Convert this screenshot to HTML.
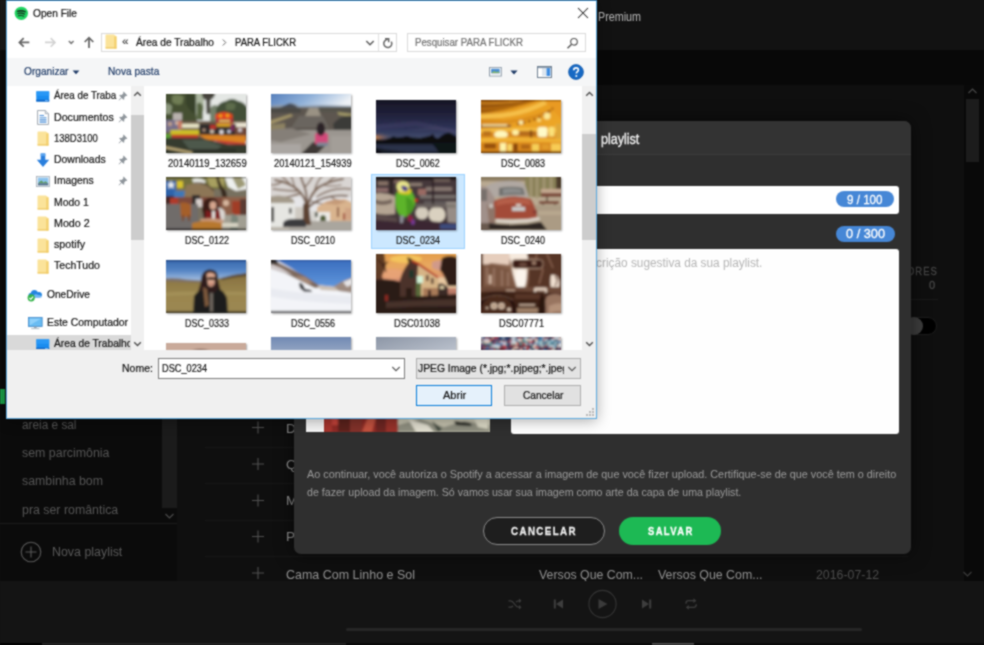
<!DOCTYPE html>
<html>
<head>
<meta charset="utf-8">
<title>Open File</title>
<style>
*{box-sizing:border-box;margin:0;padding:0}
html,body{width:984px;height:645px;overflow:hidden;background:#0e0e0e;font-family:"Liberation Sans",sans-serif;}
.abs{position:absolute}
.tx{position:absolute;white-space:pre;transform-origin:0 50%}
#sp{position:absolute;left:0;top:0;width:984px;height:645px;background:#0f0f0f;overflow:hidden}
#modal{position:absolute;left:294px;top:121px;width:617px;height:433px;background:#2f2f2f;border-radius:7px;overflow:hidden;box-shadow:0 0 18px rgba(0,0,0,.55)}
#mo{position:absolute;left:0;top:0;width:984px;height:645px;overflow:hidden}
.badge{position:absolute;background:#4687d6;border-radius:9px;height:16px}
#dlg{position:absolute;left:0;top:0;width:984px;height:645px;overflow:hidden}
#dlgbox{position:absolute;left:6px;top:0;width:591px;height:419px;background:#fff;box-shadow:0 2px 13px rgba(0,0,0,.32)}
.th{position:absolute;box-shadow:1px 1px 2px rgba(0,0,0,.35);overflow:hidden}
.th svg{display:block}
#dlg .tx{-webkit-text-stroke:.22px currentColor}
#bw{position:absolute;left:-10px;top:-10px;width:1004px;height:665px;overflow:hidden;background:#101010;filter:url(#soft)}
#pg{position:absolute;left:10px;top:10px;width:984px;height:645px;overflow:hidden}

</style>
</head>
<body>
<svg width="0" height="0" style="position:absolute"><defs><filter id="soft" x="0" y="0" width="100%" height="100%" color-interpolation-filters="sRGB"><feConvolveMatrix order="3" kernelMatrix="1 2 1 2 6 2 1 2 1" divisor="18" edgeMode="duplicate" preserveAlpha="true"/></filter></defs></svg>
<div id="bw"><div id="pg">
<div id="sp">
<div class="abs" style="left:0px;top:0px;width:984px;height:50px;background:#121212;"></div>
<div class="abs" style="left:0px;top:50px;width:984px;height:35px;background:#080808;"></div>
<div class="abs" style="left:0px;top:85px;width:984px;height:496px;background:#0f0f0f;"></div>
<div class="abs" style="left:0px;top:50px;width:177px;height:531px;background:#0b0b0b;"></div>
<div class="abs" style="left:0px;top:0px;width:6px;height:50px;background:#1a1a1a;"></div>
<div class="abs" style="left:0px;top:389px;width:5px;height:15px;background:#1a9e48;"></div>
<div class="tx" style="left:598.00px;top:8.75px;font-size:12.5px;line-height:16.5px;color:#bdbdbd;transform:scaleX(0.8597);">Premium</div>
<div class="tx" style="left:21.50px;top:417.15px;font-size:12.5px;line-height:16.5px;color:#565656;transform:scaleX(0.9447);">areia e sal</div>
<div class="tx" style="left:21.50px;top:445.15px;font-size:12.5px;line-height:16.5px;color:#565656;transform:scaleX(0.9917);">sem parcimônia</div>
<div class="tx" style="left:21.50px;top:473.35px;font-size:12.5px;line-height:16.5px;color:#565656;transform:scaleX(0.9878);">sambinha bom</div>
<div class="tx" style="left:21.50px;top:501.75px;font-size:12.5px;line-height:16.5px;color:#565656;transform:scaleX(0.9890);">pra ser romântica</div>
<div class="abs" style="left:162px;top:50px;width:15px;height:458px;background:#1b1b1b;"></div>
<svg class="abs" style="left:163px;top:511px" width="13" height="10" viewBox="0 0 13 10"><path d="M2.5 3 L6.5 7 L10.5 3" fill="none" stroke="#4a4a4a" stroke-width="1.2"/></svg>
<div class="abs" style="left:0px;top:523px;width:177px;height:1px;background:#1c1c1c;"></div>
<svg class="abs" style="left:20px;top:541px" width="22" height="22" viewBox="0 0 22 22"><circle cx="11" cy="11" r="9.8" fill="none" stroke="#5a5a5a" stroke-width="1.1"/><path d="M11 5.5V16.5M5.5 11H16.5" stroke="#5a5a5a" stroke-width="1.1"/></svg>
<div class="tx" style="left:52.00px;top:544.45px;font-size:12.5px;line-height:16.5px;color:#5a5a5a;transform:scaleX(0.9919);">Nova playlist</div>
<div class="abs" style="left:205px;top:447px;width:703px;height:1px;background:#171717;"></div>
<div class="abs" style="left:205px;top:483px;width:703px;height:1px;background:#171717;"></div>
<div class="abs" style="left:205px;top:520px;width:703px;height:1px;background:#171717;"></div>
<div class="abs" style="left:205px;top:556px;width:703px;height:1px;background:#171717;"></div>
<svg class="abs" style="left:251px;top:420px" width="14" height="160" viewBox="0 0 14 160"><g stroke="#505050" stroke-width="1.1"><path d="M7 1.5V13.5M1 7.5H13"/><path d="M7 38V50M1 44H13"/><path d="M7 74.5V86.5M1 80.5H13"/><path d="M7 110.5V122.5M1 116.5H13"/><path d="M7 147V159M1 153H13"/></g></svg>
<div class="tx" style="left:286.00px;top:419.55px;font-size:13.5px;line-height:17.5px;color:#949494;">D</div>
<div class="tx" style="left:286.00px;top:455.75px;font-size:13.5px;line-height:17.5px;color:#949494;">Q</div>
<div class="tx" style="left:286.00px;top:491.95px;font-size:13.5px;line-height:17.5px;color:#949494;">M</div>
<div class="tx" style="left:286.00px;top:528.25px;font-size:13.5px;line-height:17.5px;color:#949494;">P</div>
<div class="tx" style="left:286.00px;top:565.55px;font-size:13.5px;line-height:17.5px;color:#949494;transform:scaleX(0.9242);">Cama Com Linho e Sol</div>
<div class="tx" style="left:539.00px;top:565.55px;font-size:13.5px;line-height:17.5px;color:#949494;transform:scaleX(0.9119);">Versos Que Com...</div>
<div class="tx" style="left:658.30px;top:565.55px;font-size:13.5px;line-height:17.5px;color:#949494;transform:scaleX(0.9163);">Versos Que Com...</div>
<div class="tx" style="left:815.50px;top:565.55px;font-size:13.5px;line-height:17.5px;color:#4d4d4d;transform:scaleX(0.9137);">2016-07-12</div>
<div class="tx" style="left:906.50px;top:263.50px;font-size:11px;line-height:15px;color:#484848;letter-spacing:1.2px;transform:scaleX(0.8559);-webkit-text-stroke:.3px #484848;">ORES</div>
<div class="tx" style="left:929.40px;top:277.70px;font-size:11px;line-height:15px;color:#484848;transform:scaleX(1.0122);-webkit-text-stroke:.3px #484848;">0</div>
<div class="abs" style="left:850px;top:299px;width:88px;height:1px;background:#1a1a1a;"></div>
<div class="abs" style="left:903px;top:317.4px;width:33.5px;height:18px;background:#000;border-radius:9px;border:1px solid #1d1d1d"></div>
<div class="abs" style="left:904.6px;top:317.4px;width:18px;height:18px;background:#3d3d3d;border-radius:9px"></div>
<div class="abs" style="left:964px;top:85px;width:20px;height:496px;background:#090909;"></div>
<div class="abs" style="left:966px;top:99px;width:13px;height:63px;background:#1c1c1c;"></div>
<svg class="abs" style="left:966px;top:86px" width="13" height="10" viewBox="0 0 13 10"><path d="M2.5 7 L6.5 3 L10.5 7" fill="none" stroke="#484848" stroke-width="1.2"/></svg>
<svg class="abs" style="left:961px;top:569px" width="13" height="10" viewBox="0 0 13 10"><path d="M2.5 3 L6.5 7 L10.5 3" fill="none" stroke="#3c3c3c" stroke-width="1.2"/></svg>
<div class="abs" style="left:0px;top:581px;width:984px;height:64px;background:#141414;"></div>
<div class="abs" style="left:346px;top:628px;width:516px;height:3px;background:#262626;border-radius:2px"></div>
<div class="abs" style="left:0px;top:643px;width:42px;height:2px;background:#000;"></div>
<div class="abs" style="left:42px;top:643px;width:304px;height:2px;background:#222;"></div>
<div class="abs" style="left:346px;top:643px;width:638px;height:2px;background:#0a0a0a;"></div>
<div class="abs" style="left:652px;top:643px;width:42px;height:2px;background:#4a4a4a;"></div>
<svg class="abs" style="left:500px;top:588px" width="205" height="32" viewBox="0 0 205 32">
<g fill="none" stroke="#3d3d3d" stroke-width="1.3">
<circle cx="102.5" cy="16" r="13.6" stroke="#343434" stroke-width="1.1"/>
<path d="M8.5 12.8H10.5C12.5 12.8 13.5 14.5 14.5 16S16.500 19.200 18.500 19.200H19.500M8.500 19.200H10.500C11.600 19.200 12.400 18.600 13 17.800M16 14.200C16.600 13.400 17.400 12.800 18.500 12.800H19.500"/>
<path d="M186 15.800V15.200C186 13.500 187.300 12.700 188.500 12.700H194M196.200 16.200V16.800C196.200 18.500 194.900 19.300 193.700 19.300H188.200"/>
</g>
<g fill="#3d3d3d">
<path d="M19 10.600L21.500 12.800L19 15ZM19 17L21.500 19.200L19 21.400Z"/>
<path d="M53.800 11.500H55.800V20.500H53.800ZM63 11.500V20.500L56 16Z"/>
<path d="M98.500 11L107.500 16L98.500 21Z" fill="#3a3a3a"/>
<path d="M151.200 11.500H149.200V20.500H151.200ZM142 11.500V20.500L149 16Z"/>
<path d="M193.400 10.300L196.400 12.700L193.400 15.100ZM188.800 16.900L185.800 19.300L188.800 21.700Z"/>
</g></svg>
</div>
<div id="modal"></div>
<div id="mo">
<div class="abs" style="left:294px;top:121px;width:617px;height:34px;background:#333;border-radius:7px 7px 0 0;border-bottom:1px solid #3b3b3b"></div>
<div class="tx" style="left:600.70px;top:130.00px;font-size:14px;line-height:18px;color:#f0f0f0;transform:scaleX(0.8949);-webkit-text-stroke:.35px #f0f0f0;">playlist</div>
<div class="abs" style="left:306px;top:185.5px;width:593px;height:28px;background:#fff;border-radius:3px"></div>
<div class="badge" style="left:835.5px;top:190.800px;width:58.5px"></div>
<div class="tx" style="left:847.00px;top:190.50px;font-size:13px;line-height:17px;color:#fff;transform:scaleX(0.8927);-webkit-text-stroke:.3px #fff;">9 / 100</div>
<div class="badge" style="left:836px;top:225.500px;width:59px"></div>
<div class="tx" style="left:846.00px;top:225.20px;font-size:13px;line-height:17px;color:#fff;transform:scaleX(0.9807);-webkit-text-stroke:.3px #fff;">0 / 300</div>
<div class="abs" style="left:510.6px;top:248.7px;width:388px;height:185.3px;background:#fefefe;border-radius:3px"></div>
<div class="tx" style="left:577.30px;top:254.75px;font-size:12.5px;line-height:16.5px;color:#b4b4b4;transform:scaleX(0.9462);">descrição sugestiva da sua playlist.</div>
<div class="abs" style="left:306px;top:249px;width:184px;height:183px;background:#c9c5b2;"></div>
<div class="abs" style="left:306px;top:249px;width:17.5px;height:183px;background:#f4f4f4;"></div>
<svg class="abs" style="left:323.500px;top:249px" width="166" height="183" viewBox="0 0 166 183" preserveAspectRatio="none"><g filter="url(#b90)"><rect x="-5" y="-5" width="80" height="193" fill="#8e2c26"/><rect x="0" y="0" width="8" height="183" fill="#a8352e"/><rect x="8" y="166" width="6" height="10" fill="#c8443a"/><rect x="14" y="0" width="12" height="183" fill="#5c201d"/><rect x="26" y="0" width="12" height="183" fill="#82302a"/><path d="M38 183L44 168H52L48 183Z" fill="#c4523f"/><rect x="52" y="0" width="10" height="183" fill="#6e2622"/><rect x="62" y="0" width="12" height="183" fill="#98332b"/><rect x="74" y="-5" width="97" height="193" fill="#c7c4b0"/><path d="M74 176L96 170L120 178L140 172L166 176V183H74Z" fill="#8f8f80"/><path d="M84 170L104 176L110 183H92Z" fill="#e2dfd0"/><path d="M108 172L118 180L114 183Z" fill="#3f463c"/><path d="M130 172L146 174L148 177L132 176Z" fill="#20241f"/><path d="M150 170L164 168V180L154 178Z" fill="#dedbc8"/></g></svg>
<div class="tx" style="left:306.70px;top:466.95px;font-size:11.5px;line-height:15.5px;color:#9c9c9c;transform:scaleX(0.9416);">Ao continuar, você autoriza o Spotify a acessar a imagem de que você fizer upload. Certifique-se de que você tem o direito</div>
<div class="tx" style="left:306.70px;top:484.75px;font-size:11.5px;line-height:15.5px;color:#9c9c9c;transform:scaleX(0.9244);">de fazer upload da imagem. Só vamos usar sua imagem como arte da capa de uma playlist.</div>
<div class="abs" style="left:483px;top:517px;width:122px;height:28px;background:#1e1e1e;border:1.800px solid #8c8c8c;border-radius:14px"></div>
<div class="tx" style="left:511.40px;top:523.50px;font-size:11px;line-height:15px;color:#f0f0f0;font-weight:700;letter-spacing:1.6px;transform:scaleX(0.8855);-webkit-text-stroke:.3px #f0f0f0;">CANCELAR</div>
<div class="abs" style="left:619px;top:517px;width:102px;height:28px;background:#1db954;border-radius:14px"></div>
<div class="tx" style="left:647.50px;top:523.50px;font-size:11px;line-height:15px;color:#fff;font-weight:700;letter-spacing:1.6px;transform:scaleX(0.8590);-webkit-text-stroke:.3px #fff;">SALVAR</div>
</div>
<div id="dlg">
<div id="dlgbox"></div>
<div class="abs" style="left:7px;top:58px;width:589px;height:28px;background:#f5f6f7;"></div>
<div class="abs" style="left:7px;top:350px;width:589px;height:68px;background:#f0f0f0;"></div>
<div class="abs" style="left:6px;top:0px;width:591px;height:419px;background:transparent;border:1px solid #58a9e0;border-top:1px solid #3c97da"></div>
<svg class="abs" style="left:13.600px;top:5.700px" width="14.600" height="14.600" viewBox="0 0 16 16"><circle cx="8" cy="8" r="7.300" fill="#1fd460"/><g fill="none" stroke="#14251a" stroke-linecap="round"><path d="M3.800 5.800Q8 4.300 12.300 6.300" stroke-width="1.500"/><path d="M4.200 8.300Q8 7.100 11.600 8.800" stroke-width="1.250"/><path d="M4.700 10.600Q7.900 9.700 10.800 11.100" stroke-width="1.050"/></g></svg>
<div class="tx" style="left:33.00px;top:6.25px;font-size:11.5px;line-height:15.5px;color:#111;transform:scaleX(0.8825);">Open File</div>
<svg class="abs" style="left:577px;top:7px" width="12" height="12" viewBox="0 0 12 12"><path d="M1 1L11 11M11 1L1 11" stroke="#222" stroke-width="1.050"/></svg>
<svg class="abs" style="left:17px;top:35px" width="80" height="15" viewBox="0 0 80 15"><path d="M12.300 7.400H2.600M6.700 3.100L2.400 7.400L6.700 11.700" fill="none" stroke="#666" stroke-width="1.750"/><path d="M28 7.400H37.800M33.700 3.100L38 7.400L33.700 11.700" fill="none" stroke="#d2d2d2" stroke-width="1.600"/><path d="M51.800 6L54.200 8.400L56.600 6" fill="none" stroke="#777" stroke-width="1.500"/><path d="M72 13V2.800M67.700 7L72 2.700L76.300 7" fill="none" stroke="#666" stroke-width="1.750"/></svg>
<div class="abs" style="left:101px;top:32.7px;width:296px;height:19.3px;background:#fff;border:1px solid #d9d9d9"></div>
<svg class="abs" style="left:104.8px;top:34px" width="12" height="15" viewBox="0 0 12 15"><path d="M0.5 1.2 Q0.5 0.5 1.2 0.5H8.8L11.5 2.2V13.8Q11.5 14.5 10.8 14.5H1.200Q0.500 14.500 0.500 13.800Z" fill="#fbe39a"/><path d="M9.300 2.500H11.500V14.500H9.300Z" fill="#f3cf6d"/><path d="M0.500 13.300H11.500V14.500H0.500Z" fill="#efc863"/></svg>
<div class="tx" style="left:122.00px;top:34.25px;font-size:11.5px;line-height:15.5px;color:#444;transform:scaleX(1.0146);">«</div>
<div class="tx" style="left:136.00px;top:34.55px;font-size:11.5px;line-height:15.5px;color:#111;transform:scaleX(0.8840);">Área de Trabalho</div>
<svg class="abs" style="left:221px;top:38px" width="7" height="9" viewBox="0 0 7 9"><path d="M1.800 1.500L4.800 4.500L1.800 7.500" fill="none" stroke="#666" stroke-width="1"/></svg>
<div class="tx" style="left:235.00px;top:34.55px;font-size:11.5px;line-height:15.5px;color:#111;transform:scaleX(0.8252);">PARA FLICKR</div>
<svg class="abs" style="left:365px;top:39px" width="10" height="8" viewBox="0 0 10 8"><path d="M1.300 2L5 5.700L8.700 2" fill="none" stroke="#606060" stroke-width="1.600"/></svg>
<div class="abs" style="left:378px;top:33.5px;width:1px;height:17.5px;background:#e1e1e1;"></div>
<svg class="abs" style="left:382px;top:36.500px" width="12" height="12" viewBox="0 0 12 12"><path d="M9.300 4.600A4 4 0 1 1 5.700 2.500" fill="none" stroke="#666" stroke-width="1.500"/><path d="M3 1.700H6.700V5.300" fill="none" stroke="#666" stroke-width="1.500"/></svg>
<div class="abs" style="left:407px;top:32.7px;width:179px;height:19.3px;background:#fff;border:1px solid #d9d9d9"></div>
<div class="tx" style="left:415.00px;top:35.25px;font-size:11.5px;line-height:15.5px;color:#6f6f6f;transform:scaleX(0.8420);">Pesquisar PARA FLICKR</div>
<svg class="abs" style="left:566px;top:37px" width="13" height="13" viewBox="0 0 13 13"><circle cx="8" cy="4.800" r="3.300" fill="none" stroke="#5a5a5a" stroke-width="1.200"/><path d="M5.600 7.200L1.500 11.300" stroke="#5a5a5a" stroke-width="1.500"/></svg>
<div class="tx" style="left:23.50px;top:64.25px;font-size:11.5px;line-height:15.5px;color:#1e3a66;transform:scaleX(0.8812);">Organizar</div>
<svg class="abs" style="left:72px;top:70px" width="8" height="5" viewBox="0 0 8 5"><path d="M0.600 0.500H7.400L4 4.300Z" fill="#1e3a66"/></svg>
<div class="tx" style="left:107.50px;top:64.25px;font-size:11.5px;line-height:15.5px;color:#1e3a66;transform:scaleX(0.8816);">Nova pasta</div>
<svg class="abs" style="left:489px;top:67px" width="12.800" height="9.500" viewBox="0 0 12 11" preserveAspectRatio="none"><rect x="0.500" y="0.500" width="11" height="10" fill="#fff" stroke="#8c9aa8"/><rect x="2" y="2" width="8" height="5" fill="#4e8fd0"/><path d="M2 7L5 4.500L7 6L8.500 5L10 7Z" fill="#7fb56a"/><rect x="2" y="7" width="8" height="1.500" fill="#c9d3dc"/></svg>
<svg class="abs" style="left:510px;top:70px" width="8" height="5" viewBox="0 0 8 5"><path d="M0.400 0.500H7.600L4 4.400Z" fill="#1e3a66"/></svg>
<svg class="abs" style="left:537px;top:66px" width="15" height="12" viewBox="0 0 15 12"><rect x="0.500" y="0.500" width="14" height="11" fill="#fff" stroke="#6f7f90"/><rect x="5" y="2" width="4" height="8" fill="#dde6ef"/><rect x="9.500" y="2" width="3.800" height="8" fill="#3f8ce0"/><rect x="1" y="1" width="13" height="1.200" fill="#8fa0b2"/></svg>
<svg class="abs" style="left:568px;top:64px" width="16" height="16" viewBox="0 0 16 16"><circle cx="8" cy="8" r="7.400" fill="#1769c4"/><circle cx="8" cy="8" r="7.400" fill="none" stroke="#0f57a8" stroke-width=".800"/><path d="M5.700 6.200C5.700 4.700 6.700 3.900 8.100 3.900C9.500 3.900 10.400 4.700 10.400 5.900C10.400 7.600 8.300 7.700 8.300 9.600" fill="none" stroke="#fff" stroke-width="1.600"/><circle cx="8.300" cy="11.900" r="1" fill="#fff"/></svg>
<div class="abs" style="left:7px;top:334.5px;width:124px;height:15.5px;background:#d9d9d9;"></div>
<div class="tx" style="left:54.30px;top:88.25px;font-size:11.5px;line-height:15.5px;color:#111;transform:scaleX(0.8533);">Área de Traba</div>
<svg class="abs" style="left:36px;top:91px" width="13.500" height="10.800" viewBox="0 0 15 12"><rect x="0.300" y="0.300" width="14.400" height="11.400" rx=".600" fill="#1b8df0"/><rect x="0.300" y="0.300" width="14.400" height="5" fill="#2f9df8" opacity=".700"/><rect x="0.300" y="9.700" width="14.400" height="2" fill="#0c62c4"/><rect x="10" y="10.200" width="3.500" height="1" fill="#7fc0ff"/></svg>
<div class="tx" style="left:54.30px;top:109.85px;font-size:11.5px;line-height:15.5px;color:#111;transform:scaleX(0.9247);">Documentos</div>
<svg class="abs" style="left:37px;top:110.1px" width="12" height="15" viewBox="0 0 12 15"><path d="M0.500 0.500H8.300L11.500 3.700V14.500H0.500Z" fill="#fdfdfd" stroke="#9aa3ad" stroke-width=".900"/><path d="M8.300 0.500V3.700H11.500" fill="#e4e8ed" stroke="#9aa3ad" stroke-width=".800"/><g stroke="#4a8ed8" stroke-width="1.100"><path d="M2.500 5.500H7M2.500 7.700H9.500M2.500 9.900H9.500M2.500 12.100H9.500"/></g></svg>
<div class="tx" style="left:54.30px;top:130.95px;font-size:11.5px;line-height:15.5px;color:#111;transform:scaleX(0.8233);">138D3100</div>
<svg class="abs" style="left:37px;top:131.2px" width="12" height="15" viewBox="0 0 12 15"><path d="M0.5 1.2 Q0.5 0.5 1.2 0.5H8.8L11.5 2.2V13.8Q11.5 14.5 10.8 14.5H1.200Q0.500 14.500 0.500 13.800Z" fill="#fbe39a"/><path d="M9.300 2.500H11.500V14.500H9.300Z" fill="#f3cf6d"/><path d="M0.500 13.300H11.500V14.500H0.500Z" fill="#efc863"/></svg>
<div class="tx" style="left:54.30px;top:152.25px;font-size:11.5px;line-height:15.5px;color:#111;transform:scaleX(0.9085);">Downloads</div>
<svg class="abs" style="left:35.5px;top:153px" width="14" height="15" viewBox="0 0 14 15"><path d="M4.700 0.500H9.300V6.800H13.200L7 14L0.800 6.800H4.700Z" fill="#2a7fdd"/><path d="M4.700 0.500H9.300V3H4.700Z" fill="#57a2ee"/></svg>
<div class="tx" style="left:54.30px;top:173.25px;font-size:11.5px;line-height:15.5px;color:#111;transform:scaleX(0.9000);">Imagens</div>
<svg class="abs" style="left:35.5px;top:175.7px" width="14.200" height="11" viewBox="0 0 15 12"><rect x="0.400" y="0.400" width="14.200" height="11.200" fill="#f4f6f8" stroke="#9ba6b2" stroke-width=".800"/><rect x="1.800" y="1.800" width="11.400" height="6.200" fill="#8cc3ee"/><path d="M1.800 8L5.500 4.800L8.200 7L10 5.800L13.200 8Z" fill="#5f9b62"/><rect x="1.800" y="8" width="11.400" height="2.200" fill="#4b6b88"/></svg>
<div class="tx" style="left:54.30px;top:194.55px;font-size:11.5px;line-height:15.5px;color:#111;transform:scaleX(0.9046);">Modo 1</div>
<svg class="abs" style="left:37px;top:194.8px" width="12" height="15" viewBox="0 0 12 15"><path d="M0.5 1.2 Q0.5 0.5 1.2 0.5H8.8L11.5 2.2V13.8Q11.5 14.5 10.8 14.5H1.200Q0.500 14.500 0.500 13.800Z" fill="#fbe39a"/><path d="M9.300 2.500H11.500V14.500H9.300Z" fill="#f3cf6d"/><path d="M0.500 13.300H11.500V14.500H0.500Z" fill="#efc863"/></svg>
<div class="tx" style="left:54.30px;top:215.85px;font-size:11.5px;line-height:15.5px;color:#111;transform:scaleX(0.9307);">Modo 2</div>
<svg class="abs" style="left:37px;top:216.1px" width="12" height="15" viewBox="0 0 12 15"><path d="M0.5 1.2 Q0.5 0.5 1.2 0.5H8.8L11.5 2.2V13.8Q11.5 14.5 10.8 14.5H1.200Q0.500 14.500 0.500 13.800Z" fill="#fbe39a"/><path d="M9.300 2.500H11.500V14.500H9.300Z" fill="#f3cf6d"/><path d="M0.500 13.300H11.500V14.500H0.500Z" fill="#efc863"/></svg>
<div class="tx" style="left:54.30px;top:237.25px;font-size:11.5px;line-height:15.5px;color:#111;transform:scaleX(0.9323);">spotify</div>
<svg class="abs" style="left:37px;top:237.5px" width="12" height="15" viewBox="0 0 12 15"><path d="M0.5 1.2 Q0.5 0.5 1.2 0.5H8.8L11.5 2.2V13.8Q11.5 14.5 10.8 14.5H1.200Q0.500 14.500 0.500 13.800Z" fill="#fbe39a"/><path d="M9.300 2.500H11.500V14.500H9.300Z" fill="#f3cf6d"/><path d="M0.500 13.300H11.500V14.500H0.500Z" fill="#efc863"/></svg>
<div class="tx" style="left:54.30px;top:258.45px;font-size:11.5px;line-height:15.5px;color:#111;transform:scaleX(0.9166);">TechTudo</div>
<svg class="abs" style="left:37px;top:258.7px" width="12" height="15" viewBox="0 0 12 15"><path d="M0.5 1.2 Q0.5 0.5 1.2 0.5H8.8L11.5 2.2V13.8Q11.5 14.5 10.8 14.5H1.200Q0.500 14.500 0.500 13.800Z" fill="#fbe39a"/><path d="M9.300 2.500H11.500V14.500H9.300Z" fill="#f3cf6d"/><path d="M0.500 13.300H11.500V14.500H0.500Z" fill="#efc863"/></svg>
<svg class="abs" style="left:118px;top:91px" width="10" height="10" viewBox="0 0 10 10"><path d="M5.600 0.600L9.400 4.400L8.600 5.000L7.900 4.700L6.200 6.400L6.300 8.200L5.600 8.800L3.700 6.900L1.000 9.500L0.600 9.100L3.200 6.400L1.300 4.500L1.900 3.800L3.700 3.900L5.400 2.200L5.100 1.400Z" fill="#8f969c"/></svg>
<svg class="abs" style="left:118px;top:112.6px" width="10" height="10" viewBox="0 0 10 10"><path d="M5.600 0.600L9.400 4.400L8.600 5.000L7.900 4.700L6.200 6.400L6.300 8.200L5.600 8.800L3.700 6.900L1.000 9.500L0.600 9.100L3.200 6.400L1.300 4.500L1.900 3.800L3.700 3.900L5.400 2.200L5.100 1.400Z" fill="#8f969c"/></svg>
<svg class="abs" style="left:118px;top:133.7px" width="10" height="10" viewBox="0 0 10 10"><path d="M5.600 0.600L9.400 4.400L8.600 5.000L7.900 4.700L6.200 6.400L6.300 8.200L5.600 8.800L3.700 6.900L1.000 9.500L0.600 9.100L3.200 6.400L1.300 4.500L1.900 3.800L3.700 3.900L5.400 2.200L5.100 1.400Z" fill="#8f969c"/></svg>
<svg class="abs" style="left:118px;top:155px" width="10" height="10" viewBox="0 0 10 10"><path d="M5.600 0.600L9.400 4.400L8.600 5.000L7.900 4.700L6.200 6.400L6.300 8.200L5.600 8.800L3.700 6.900L1.000 9.500L0.600 9.100L3.200 6.400L1.300 4.500L1.900 3.800L3.700 3.900L5.400 2.200L5.100 1.400Z" fill="#8f969c"/></svg>
<svg class="abs" style="left:118px;top:176px" width="10" height="10" viewBox="0 0 10 10"><path d="M5.600 0.600L9.400 4.400L8.600 5.000L7.900 4.700L6.200 6.400L6.300 8.200L5.600 8.800L3.700 6.900L1.000 9.500L0.600 9.100L3.200 6.400L1.300 4.500L1.900 3.800L3.700 3.900L5.400 2.200L5.100 1.400Z" fill="#8f969c"/></svg>
<svg class="abs" style="left:27px;top:287px" width="16" height="15" viewBox="0 0 16 15"><path d="M4.200 10.500C2.300 10.500 1.500 9.300 1.500 8.200C1.500 6.900 2.600 6 3.800 6.100C4.100 4.300 5.600 3.100 7.400 3.100C9 3.100 10.200 4 10.800 5.300C11.200 5.100 11.700 5 12.200 5C13.800 5 15 6.300 15 7.800C15 9.400 13.800 10.500 12.300 10.500Z" fill="#2485e0"/><path d="M6.200 10.500C6 8.500 7.300 7.200 9 7.200C10 7.200 10.700 7.600 11.200 8.200C12.800 7.700 14.600 8.600 14.600 10.500Z" fill="#6fb6f5"/><circle cx="4.200" cy="10.800" r="3.600" fill="#35b34a"/><path d="M2.400 10.900L3.800 12.300L6.100 9.600" fill="none" stroke="#fff" stroke-width="1.200"/></svg>
<div class="tx" style="left:47.00px;top:286.75px;font-size:11.5px;line-height:15.5px;color:#111;transform:scaleX(0.8852);">OneDrive</div>
<svg class="abs" style="left:28.2px;top:317px" width="14.600" height="12.800" viewBox="0 0 16 14"><rect x="0.500" y="0.500" width="15" height="9.800" fill="#5bb4ee" stroke="#3f86c6" stroke-width=".900"/><rect x="1.600" y="1.600" width="12.800" height="7.600" fill="#8fd0fa"/><path d="M1.600 9.200L14.400 1.600V9.200Z" fill="#58b3f0" opacity=".700"/><rect x="6.500" y="10.500" width="3" height="1.600" fill="#9aa7b4"/><rect x="3.500" y="12" width="9" height="1.300" fill="#b5c0ca"/></svg>
<div class="tx" style="left:47.00px;top:315.25px;font-size:11.5px;line-height:15.5px;color:#111;transform:scaleX(0.9050);">Este Computador</div>
<svg class="abs" style="left:36px;top:338.7px" width="13.500" height="10.800" viewBox="0 0 15 12"><rect x="0.300" y="0.300" width="14.400" height="11.400" rx=".600" fill="#1b8df0"/><rect x="0.300" y="0.300" width="14.400" height="5" fill="#2f9df8" opacity=".700"/><rect x="0.300" y="9.700" width="14.400" height="2" fill="#0c62c4"/><rect x="10" y="10.200" width="3.500" height="1" fill="#7fc0ff"/></svg>
<div class="abs" style="left:54.300px;top:336px;width:76px;height:16px;overflow:hidden"><div class="tx" style="left:0.00px;top:0.25px;font-size:11.5px;line-height:15.5px;color:#111;transform:scaleX(0.8897);">Área de Trabalho</div></div>
<div class="abs" style="left:131px;top:86px;width:13px;height:264px;background:#f0f0f0;"></div>
<div class="abs" style="left:131px;top:115px;width:13px;height:125px;background:#cdcdcd;"></div>
<svg class="abs" style="left:133px;top:90px" width="9" height="8" viewBox="0 0 9 8"><path d="M1.200 5.800L4.500 2.500L7.800 5.800" fill="none" stroke="#505050" stroke-width="1.400"/></svg>
<svg class="abs" style="left:133px;top:340px" width="9" height="8" viewBox="0 0 9 8"><path d="M1.200 2.200L4.500 5.500L7.800 2.200" fill="none" stroke="#505050" stroke-width="1.400"/></svg>
<div class="abs" style="left:582px;top:86px;width:14px;height:264px;background:#f0f0f0;"></div>
<div class="abs" style="left:582px;top:133.5px;width:14px;height:106px;background:#cdcdcd;"></div>
<svg class="abs" style="left:584.500px;top:90px" width="9" height="8" viewBox="0 0 9 8"><path d="M1.200 5.800L4.500 2.500L7.800 5.800" fill="none" stroke="#505050" stroke-width="1.400"/></svg>
<svg class="abs" style="left:584.500px;top:339.500px" width="9" height="8" viewBox="0 0 9 8"><path d="M1.200 2.200L4.500 5.500L7.800 2.200" fill="none" stroke="#505050" stroke-width="1.400"/></svg>
<svg width="0" height="0" style="position:absolute"><defs><filter id="b30" x="-10%" y="-10%" width="120%" height="120%"><feGaussianBlur stdDeviation="0.3"/></filter><filter id="b45" x="-10%" y="-10%" width="120%" height="120%"><feGaussianBlur stdDeviation="0.45"/></filter><filter id="b50" x="-10%" y="-10%" width="120%" height="120%"><feGaussianBlur stdDeviation="0.5"/></filter><filter id="b55" x="-10%" y="-10%" width="120%" height="120%"><feGaussianBlur stdDeviation="0.55"/></filter><filter id="b60" x="-10%" y="-10%" width="120%" height="120%"><feGaussianBlur stdDeviation="0.6"/></filter><filter id="b80" x="-10%" y="-10%" width="120%" height="120%"><feGaussianBlur stdDeviation="0.8"/></filter><filter id="b90" x="-10%" y="-10%" width="120%" height="120%"><feGaussianBlur stdDeviation="0.9"/></filter><filter id="b100" x="-10%" y="-10%" width="120%" height="120%"><feGaussianBlur stdDeviation="1.0"/></filter></defs></svg>
<div class="abs" style="left:145px;top:86px;width:437px;height:264px;overflow:hidden">
<div class="abs" style="left:226px;top:87.5px;width:93.5px;height:75.5px;background:#cce8ff;border:1px solid #99d1ff"></div>
<div class="th" style="left:21.2px;top:7.700000000000003px;width:79.500px;height:59px"><svg width="80" height="59" viewBox="0 0 80 59"><g filter="url(#b90)"><rect x="-5" y="-5" width="90" height="70" fill="#e4e7e4"/><path d="M-3 -3H31L30 12L31 27H-3Z" fill="#454f30"/><path d="M6 2Q12 -1 18 3L16 10Q10 12 6 8Z" fill="#6f7d54"/><path d="M20 0Q27 -2 30 4V20Q24 18 20 10Z" fill="#38432a"/><path d="M-2 10Q2 8 6 12L5 20H-2Z" fill="#8b967c"/><path d="M7 19H16V26H7Z" fill="#b9b2ae"/><path d="M30 -2H38V16L34 22L30 20Z" fill="#aab59e"/><path d="M31 10Q34 6 37 12V26H31Z" fill="#55633f"/><path d="M36 -3H50L48 3Q46 5 44.500 6L44 20H40.500L40 6Q37 5 36 2Z" fill="#45423b"/><path d="M44 14Q49 8 54 14V28H44Z" fill="#73806a"/><path d="M50 16Q52 8 60 7Q66 3 72 7Q78 8 82 14V30H50Z" fill="#435039"/><path d="M60 10Q66 7 70 11L68 16H60Z" fill="#5d6c4c"/><rect x="-2" y="27" width="84" height="20" fill="#6a5a48"/><rect x="15" y="29.800" width="20" height="4" fill="#ebe8c8"/><rect x="68" y="28.700" width="14" height="4.300" fill="#ece6d4"/><rect x="-2" y="26" width="17" height="12" fill="#77708a"/><circle cx="4" cy="30" r="2" fill="#c9a58e"/><circle cx="11" cy="29" r="2" fill="#d9b9a2"/><rect x="12" y="27" width="4" height="8" fill="#c87a62"/><rect x="4.500" y="36" width="29" height="5" fill="#cdc127"/><rect x="6" y="40.700" width="26" height="3" fill="#c23428"/><rect x="-2" y="40" width="6.500" height="6" fill="#58a030"/><path d="M49.500 25V20.500Q58 15.500 66.500 20.500V25Z" fill="#e5401f"/><circle cx="54.500" cy="21.800" r="1.900" fill="#f0a01c"/><circle cx="61.500" cy="21.500" r="1.900" fill="#f0a01c"/><rect x="50" y="24.800" width="17" height="4.500" fill="#a8263a"/><rect x="53" y="26" width="11" height="1.800" fill="#e6cf6a"/><rect x="33" y="30" width="37" height="11.500" fill="#2f2b2c"/><rect x="50.500" y="29.300" width="17.500" height="3.400" fill="#dba325"/><rect x="44" y="31" width="6" height="4" fill="#b9302a"/><circle cx="46" cy="37.500" r="2" fill="#d8c9b8"/><circle cx="55.500" cy="38" r="2.200" fill="#e6e2e6"/><circle cx="63" cy="37.500" r="1.800" fill="#cfd3e4"/><circle cx="38" cy="36" r="1.600" fill="#b99a82"/><rect x="64.500" y="30" width="3.500" height="7" fill="#7a2c5c"/><rect x="69" y="33" width="13" height="9" fill="#6e4638"/><circle cx="74" cy="36" r="2" fill="#d8d2d8"/><path d="M32 40.500L80 41.500V49L62 48.500L40 45.500Z" fill="#da8222"/><path d="M44 45.500L80 49V51.500L60 50.500Z" fill="#c23a30"/><path d="M-2 44H34L62 50.500H82V62H-2Z" fill="#343a2f"/><path d="M16 46H40L56 52L50 56H24Z" fill="#525e50" opacity=".85"/><path d="M-2 55H70V58H-2Z" fill="#272c25" opacity=".8"/><path d="M-2 51.800L27 57.800L25.500 60L-2 54.500Z" fill="#bba877"/></g></svg></div>
<div class="th" style="left:126.2px;top:7.700000000000003px;width:79.500px;height:59px"><svg width="80" height="59" viewBox="0 0 80 59"><g filter="url(#b90)"><defs><linearGradient id="g2" x1="0" y1="0" x2="1" y2=".3"><stop offset="0" stop-color="#4873b4"/><stop offset=".55" stop-color="#8fb0d8"/><stop offset="1" stop-color="#eef2f6"/></linearGradient></defs><rect x="-5" y="-5" width="90" height="20" fill="url(#g2)"/><path d="M-2 12Q8 10 14 11L20 9Q25 9 28 12L50 11L82 12V16H-2Z" fill="#8d9cae"/><path d="M8 14L18 9.500Q22 9 27 13.500L30 15H8Z" fill="#454b55"/><rect x="-2" y="13.500" width="84" height="26" fill="#5d574f"/><path d="M-2 14H30V19H-2Z" fill="#4b4944"/><path d="M48 13H82V18H48Z" fill="#55524c"/><path d="M38 14H47L50 22H34Z" fill="#9a9284"/><path d="M28 22H52L58 34H20Z" fill="#6a655e"/><path d="M-2 27L20 20L22 22L-2 31Z" fill="#a39468"/><path d="M66 18L82 20V23L68 21Z" fill="#a39a68"/><path d="M-2 31L14 29V35L-2 38Z" fill="#8d8262"/><path d="M62 30Q70 20 82 22V42H64Z" fill="#3b3a38"/><path d="M20 35H48V38H20Z" fill="#3f3c39"/><path d="M-2 36H82V62H-2Z" fill="#9b9690"/><path d="M-2 36L20 34L40 40L10 48L-2 46Z" fill="#857f78"/><path d="M-2 50H30V62H-2Z" fill="#aaa6a2"/><path d="M60 42H82V62H60Z" fill="#a39e98"/><path d="M30 60L42 48L56 50L50 56L44 62Z" fill="#3d3936"/><path d="M44 40Q50 36 57 40L57 50H44Z" fill="#d2487a"/><rect x="46" y="48.500" width="11" height="3.500" fill="#7b8595"/><ellipse cx="49.800" cy="35" rx="4.300" ry="6.800" fill="#2c2125"/></g></svg></div>
<div class="th" style="left:231.2px;top:14px;width:79.500px;height:52.8px"><svg width="80" height="53" viewBox="0 0 80 53"><g filter="url(#b90)"><defs><linearGradient id="g3" x1="0" y1="0" x2="0" y2="1"><stop offset="0" stop-color="#14131c"/><stop offset=".3" stop-color="#20203a"/><stop offset=".55" stop-color="#2f3559"/><stop offset=".7" stop-color="#46516f"/><stop offset=".76" stop-color="#2c3045"/><stop offset="1" stop-color="#1b1e2e"/></linearGradient><radialGradient id="g3b" cx=".1" cy=".7" r=".4"><stop offset="0" stop-color="#d88a3c"/><stop offset=".45" stop-color="#9c6a58" stop-opacity=".55"/><stop offset="1" stop-color="#5a5a6a" stop-opacity="0"/></radialGradient></defs><rect x="-5" y="-5" width="90" height="63" fill="url(#g3)"/><path d="M-2 25L40 21L82 30V33L40 26L-2 29Z" fill="#56507a" opacity=".25"/><path d="M30 30L60 27L82 31V34L60 30Z" fill="#6a5a78" opacity=".22"/><rect x="-5" y="29" width="44" height="12" fill="url(#g3b)"/><path d="M-2 39.500L8 39.500L14 38L17.500 36.300L21 37.500L26 37L31 36L36 37.500L44 38L50 36.800L55 35.500L57 33.500L58.500 37L62 38.500L65 36L69 33.500L73 32.500L77 34.500L82 37V47H-2Z" fill="#0d0b0e"/><rect x="-2" y="43" width="84" height="12" fill="#2b3149"/><path d="M-2 42.500H82V44.500H-2Z" fill="#12131c"/><path d="M-2 47L10 49.500L30 52L82 51.500V58H-2Z" fill="#181a27"/><path d="M56 43H82V54H64Z" fill="#111219"/><path d="M-2 48L6 52V56H-2Z" fill="#0c0c12"/></g></svg></div>
<div class="th" style="left:336.2px;top:14px;width:79.500px;height:52.8px"><svg width="80" height="53" viewBox="0 0 80 53"><g filter="url(#b90)"><defs><linearGradient id="g4" x1="0" y1="0" x2="1" y2="1"><stop offset="0" stop-color="#b2680f"/><stop offset=".35" stop-color="#e89c20"/><stop offset="1" stop-color="#f0b030"/></linearGradient></defs><rect x="-5" y="-5" width="90" height="63" fill="url(#g4)"/><path d="M-2 -2H58Q38 9 -2 13Z" fill="#94520e"/><path d="M-2 3Q30 4 52 -2" fill="none" stroke="#cc821c" stroke-width="2"/><path d="M-2 9Q34 9 60 -2" fill="none" stroke="#b66c10" stroke-width="2.200"/><path d="M-2 16.500Q40 18 72 -2" fill="none" stroke="#f6c048" stroke-width="4.500"/><path d="M-2 22Q44 26 82 4" fill="none" stroke="#d88a1e" stroke-width="2.500"/><path d="M60 -2H82V22Q74 10 60 -2Z" fill="#e99a22"/><path d="M36 24Q60 20 72 8" fill="none" stroke="#94500e" stroke-width="2" stroke-dasharray="3 2.500"/><path d="M-2 24.500H30V27.500H-2Z" fill="#9a6430"/><path d="M1 24.300H26V26H1Z" fill="#f6e6a8"/><path d="M-2 29Q40 26 82 29V33Q40 30 -2 33Z" fill="#f4ba40"/><path d="M-2 33Q40 30 82 33V41Q40 38 -2 41Z" fill="#d98a1c"/><ellipse cx="20" cy="34.500" rx="7" ry="3.800" fill="#fff8be"/><ellipse cx="34.500" cy="32.500" rx="3.400" ry="2.800" fill="#fff2a6"/><rect x="56.500" y="27" width="10" height="10" rx="2.500" fill="#fffac8"/><rect x="68" y="27" width="5.500" height="9.500" fill="#fbe27a"/><rect x="75" y="24" width="7" height="16" fill="#f0be48"/><path d="M76.500 24V40M79 24V40" stroke="#b4741a" stroke-width=".800"/><circle cx="66" cy="16" r="3.400" fill="#fde894"/><circle cx="40" cy="22.500" r="2.200" fill="#fff2ae"/><circle cx="58" cy="20" r="2" fill="#fbdc7a"/><path d="M38 31H55V36H38Z" fill="#a8621a" opacity=".75"/><path d="M50 30V38" stroke="#5e2e08" stroke-width="1.400"/><path d="M2 31H10V36H2Z" fill="#b06a1a" opacity=".8"/><path d="M-2 38Q40 36 82 39V42.500Q40 40 -2 42.500Z" fill="#f0b236"/><rect x="-2" y="42.500" width="84" height="12" fill="#d9881e"/><rect x="3" y="43.500" width="12" height="5" fill="#94500f"/><rect x="19" y="43" width="6" height="8.500" fill="#fff4a8"/><rect x="26.500" y="44" width="4.500" height="7" fill="#f8d868"/><rect x="32.500" y="43.500" width="4" height="7.500" fill="#80400b"/><rect x="40" y="44.500" width="9" height="4.500" fill="#b06616"/><rect x="51" y="44" width="7" height="7" fill="#f6d058"/><rect x="61" y="44.500" width="7" height="5" fill="#e29c2c"/><rect x="70" y="43.500" width="10" height="7.500" fill="#f8cc54"/><rect x="-2" y="51.700" width="84" height="3" fill="#522806"/><rect x="-2" y="-2" width="84" height="2.500" fill="#6a340a"/></g></svg></div>
<div class="th" style="left:21.2px;top:91.19999999999999px;width:79.500px;height:52.8px"><svg width="80" height="53" viewBox="0 0 80 53"><g filter="url(#b90)"><rect x="-5" y="-5" width="90" height="63" fill="#77705e"/><rect x="-2" y="-2" width="84" height="14" fill="#72703c"/><path d="M26 2Q34 0 40 4L38 7H28Z" fill="#e9ebe6"/><path d="M58 -2H82V12L70 14L62 10Z" fill="#eef0ee"/><path d="M66 0L74 -2L80 8L72 12Z" fill="#8a8458" opacity=".8"/><path d="M40 -2H58V10H44Z" fill="#a8a060"/><rect x="-2" y="4" width="12" height="16" fill="#2d63aa"/><path d="M5 3L6.200 6.500L9.500 6.500L7 8.600L8 12L5 10L2 12L3 8.600L0.500 6.500L3.800 6.500Z" fill="#f2f2f0"/><rect x="11" y="4" width="6" height="7" fill="#d8c22e"/><rect x="8" y="14" width="12" height="8" fill="#3c78b8"/><path d="M20 8Q36 4 48 12V20H18Z" fill="#8d7656"/><path d="M28 6Q40 4 48 14" fill="none" stroke="#5a4a38" stroke-width="1.500"/><path d="M52 -2Q54 8 60 14L62 24H57L55 14Q51 8 50 -2Z" fill="#35281e"/><rect x="-2" y="20" width="84" height="10" fill="#7b4a3a"/><rect x="0" y="19" width="8" height="10" fill="#3a2828"/><rect x="4" y="21" width="8" height="6" fill="#b03a2c"/><rect x="26" y="18" width="8" height="12" fill="#2e2a2a"/><rect x="30" y="22" width="6" height="8" fill="#d8d0cc"/><rect x="-2" y="27" width="34" height="28" fill="#706c6a"/><path d="M14 26Q20 24 25 28V40H15Z" fill="#a55e2a"/><rect x="16" y="38" width="2" height="6" fill="#7a4420"/><rect x="22" y="38" width="2" height="6" fill="#7a4420"/><rect x="56" y="20" width="26" height="22" fill="#8d6048"/><circle cx="60" cy="26" r="3" fill="#d8b8a0"/><rect x="66" y="24" width="8" height="14" fill="#a03c28"/><rect x="74" y="22" width="8" height="16" fill="#5a3a30"/><rect x="56" y="38" width="26" height="16" fill="#a19e92"/><path d="M66 36L72 40V52H64Z" fill="#7a8478"/><path d="M38 24Q44 18 51 23L54 34L52 42H38L36 32Z" fill="#3b1d16"/><ellipse cx="47" cy="28.500" rx="3.400" ry="4.200" fill="#d6a68e"/><path d="M52 31Q58 31 59 36L58 44H52Z" fill="#dcd8d4"/><path d="M40 33L47 36L53 32L55 44H39Z" fill="#7c1d1e"/><path d="M46 34H49V44H46Z" fill="#e4e0dc"/><path d="M34 42Q46 40 58 43L56 47H36Z" fill="#c99a7c"/><path d="M26 46Q40 42 56 46V54H26Z" fill="#b8782e"/><path d="M56 46H72V50H56Z" fill="#d8d4c4"/><rect x="-2" y="51.800" width="84" height="3" fill="#0d0d0d"/><rect x="-2" y="-2" width="84" height="2.500" fill="#2a2a20"/></g></svg></div>
<div class="th" style="left:126.2px;top:91.19999999999999px;width:79.500px;height:52.8px"><svg width="80" height="53" viewBox="0 0 80 53"><g filter="url(#b90)"><rect x="-5" y="-5" width="90" height="63" fill="#e6e6e8"/><g stroke="#6d5444" fill="none" stroke-linecap="round"><path d="M36 30Q34 20 28 14Q20 6 4 3" stroke-width="2.200"/><path d="M36 28Q36 14 32 6Q30 2 30 -2" stroke-width="2"/><path d="M37 28Q40 16 48 10Q58 4 72 2" stroke-width="2.200"/><path d="M38 30Q46 22 58 20Q68 18 76 19" stroke-width="1.800"/><path d="M28 14Q16 14 2 12" stroke-width="1.500"/><path d="M20 8Q14 2 10 -2" stroke-width="1.300"/><path d="M24 11Q22 4 20 -2" stroke-width="1.200"/><path d="M30 16Q20 20 6 22" stroke-width="1.400"/><path d="M34 10Q40 4 42 -2" stroke-width="1.400"/><path d="M44 12Q46 4 52 -2" stroke-width="1.300"/><path d="M52 8Q60 10 70 8" stroke-width="1.200"/><path d="M56 6Q62 0 66 -2" stroke-width="1.200"/><path d="M46 20Q54 14 66 12Q74 11 80 12" stroke-width="1.400"/><path d="M12 4Q8 8 0 8" stroke-width="1.200"/><path d="M60 20Q66 24 74 24" stroke-width="1.100"/><path d="M40 24Q50 28 62 27" stroke-width="1.300"/></g><rect x="-2" y="-2" width="84" height="22" fill="#a08874" opacity=".18"/><path d="M-2 20Q10 16 22 22L24 27H-2Z" fill="#a39a8a"/><rect x="-2" y="26" width="26" height="25" fill="#e6e6e2"/><rect x="0" y="30" width="3" height="15" fill="#2c2c2c"/><rect x="18" y="31" width="2.500" height="5.500" fill="#4a4a48"/><rect x="24" y="30" width="8" height="14" fill="#cfcac2"/><path d="M46 30L56 24L74 22L82 26V44H46Z" fill="#d9b48e"/><path d="M52 26L64 22L76 24L66 28Z" fill="#c49a78"/><rect x="46" y="35" width="13" height="9" fill="#ecebe6"/><rect x="40" y="34" width="6" height="10" fill="#d8d6d0"/><rect x="44" y="35" width="2.500" height="5" fill="#2e3a2a"/><path d="M49 44V40Q52 36 55 40V44Z" fill="#4d5c34"/><rect x="66" y="30" width="2" height="10" fill="#8a5a40"/><rect x="72" y="36" width="2" height="7" fill="#a04a38"/><rect x="74" y="31" width="8" height="12" fill="#d0a484"/><path d="M20 44H82V55H-2V50L20 50Z" fill="#aaa69e"/><path d="M32 28Q34 24 38 28L40 48H32Z" fill="#5c4232"/><path d="M12 46Q14 42 22 42H32L35 46V50H12Z" fill="#3a3a3e"/><rect x="-2" y="50" width="20" height="5" fill="#b9b4aa"/></g></svg></div>
<div class="th" style="left:231.2px;top:91.19999999999999px;width:79.500px;height:52.8px"><svg width="80" height="53" viewBox="0 0 80 53"><g filter="url(#b90)"><rect x="-5" y="-5" width="90" height="63" fill="#45383a"/><rect x="-2" y="-2" width="84" height="5" fill="#1c1516"/><rect x="2" y="4.500" width="10" height="3.500" fill="#8a7468"/><rect x="18" y="3" width="8" height="3.500" fill="#7d625c"/><rect x="34" y="6" width="12" height="3" fill="#8a7a70"/><rect x="56" y="2" width="18" height="3" fill="#6b5a54"/><rect x="0" y="11" width="12" height="4" fill="#8a6a68"/><rect x="50" y="10" width="26" height="4" fill="#84746e"/><rect x="42" y="12" width="8" height="6" fill="#9a6a64"/><rect x="44" y="18" width="36" height="3.500" fill="#77706c"/><rect x="48" y="24" width="32" height="3" fill="#5e5858"/><rect x="14" y="-2" width="2.500" height="22" fill="#2a1c1c"/><rect x="56" y="-2" width="2" height="30" fill="#2e2222"/><path d="M-2 16.500Q8 14.500 19 19V37Q8 39 -2 36Z" fill="#b5a593"/><path d="M-2 22Q6 26 16 22V26Q6 30 -2 26Z" fill="#5a4a44" opacity=".7"/><ellipse cx="46" cy="36" rx="6.500" ry="6.500" fill="#d4ccbc"/><ellipse cx="61" cy="37.500" rx="8.500" ry="8" fill="#dad1c0"/><path d="M70 25H82V48H72Z" fill="#978d86"/><path d="M40 27H80V31H40Z" fill="#77706a" opacity=".7"/><path d="M-2 41L30 43L82 46V55H-2Z" fill="#3a2830"/><path d="M-2 37L20 41L22 45L-2 43Z" fill="#5a4a4a"/><rect x="64" y="47" width="18" height="5" fill="#3c4c7c"/><path d="M20 16Q18 26 21 34Q24 40 29 40Q36 37 39 28Q40 20 35 14Z" fill="#5db42a"/><path d="M30 20Q37 22 38 30Q35 37 31 39Z" fill="#4a9a20"/><path d="M21 14Q24 19 34 17L36 13Q30 9 21 14Z" fill="#d9c926"/><ellipse cx="27" cy="9.500" rx="6.500" ry="5.500" fill="#e9e58c"/><path d="M25 9Q30 7.500 32.500 12L30 14.500Q26 14 25 9Z" fill="#4b3d86"/><circle cx="40.200" cy="23.200" r="1.700" fill="#cc3322"/><path d="M32 37L37 40L36 45L32 44Z" fill="#8a2242"/><path d="M36 42L39 44L38 48L35 47Z" fill="#7a3a9a"/><path d="M24 39L28 38.500L27 46L24 46Z" fill="#8c8c94"/></g></svg></div>
<div class="th" style="left:336.2px;top:91.19999999999999px;width:79.500px;height:52.8px"><svg width="80" height="53" viewBox="0 0 80 53"><g filter="url(#b90)"><rect x="-5" y="-5" width="90" height="63" fill="#b9a991"/><rect x="-2" y="-2" width="84" height="6" fill="#8c7d62"/><rect x="44" y="-2" width="38" height="22" fill="#8a8258"/><path d="M50 0V20M56 0V22M63 0V16M70 0V14" stroke="#a89a78" stroke-width="2"/><rect x="75" y="-2" width="6" height="20" fill="#4b3b29"/><rect x="60" y="12" width="22" height="6" fill="#c4a890"/><rect x="60" y="16" width="22" height="4" fill="#7b4b3a"/><rect x="58" y="24" width="20" height="3" fill="#7a4c3a"/><path d="M62 27V31M74 27V31M66 20V24" stroke="#4a3a30" stroke-width="1.400"/><path d="M54 28H82V55H50Z" fill="#ab9b84"/><path d="M56 34H82V38H58Z" fill="#b8a78f"/><path d="M2 12Q8 5 24 4Q40 3 44 8L48 20H4Z" fill="#b0a8a2"/><path d="M-2 10Q4 8 8 12L14 22V50H-2Z" fill="#a0908a"/><rect x="0" y="12" width="6" height="12" fill="#77706c"/><path d="M18 11Q30 8.500 42 11L44 18Q30 17 18 19Z" fill="#6f6f6d"/><path d="M22 12Q30 10.500 40 12.500L41 16Q30 15 22 17Z" fill="#8c8d8c"/><path d="M13 24Q30 16 50 22Q56 32 56 42H14Q12 32 13 24Z" fill="#a34b39"/><path d="M16 24Q30 19 48 23L50 28Q30 24 15 29Z" fill="#b55e48"/><rect x="31" y="30" width="13" height="4" fill="#c9c9c8"/><rect x="35" y="27" width="5" height="2" fill="#dcd6cc"/><path d="M6 28Q10 26 14 30V46H8Z" fill="#8f7468"/><circle cx="10" cy="29" r="2.200" fill="#c9c2bc"/><path d="M15 42Q36 45 58 40L59 43Q36 48 15 45Z" fill="#dcd4ca"/><rect x="52" y="33" width="4" height="4" fill="#8a3a30"/><path d="M8 46Q34 50 60 45L66 53H6Z" fill="#2d2521"/><path d="M-2 46H8V55H-2Z" fill="#6a5a50"/></g></svg></div>
<div class="th" style="left:21.2px;top:174px;width:79.500px;height:52.8px"><svg width="80" height="53" viewBox="0 0 80 53"><g filter="url(#b90)"><defs><linearGradient id="g9" x1="0" y1="0" x2="0" y2="1"><stop offset="0" stop-color="#2a5aa2"/><stop offset=".6" stop-color="#5585c4"/><stop offset="1" stop-color="#a9c2e2"/></linearGradient><linearGradient id="g9b" x1="0" y1="0" x2="0" y2="1"><stop offset="0" stop-color="#86703e"/><stop offset=".5" stop-color="#9a8650"/><stop offset="1" stop-color="#9c8852"/></linearGradient></defs><rect x="-5" y="-5" width="90" height="26" fill="url(#g9)"/><rect x="-5" y="-2" width="90" height="3" fill="#1e3f78"/><path d="M-2 19Q10 18 20 20L34 21L56 18L68 15L82 13V56H-2Z" fill="url(#g9b)"/><path d="M54 18.500L68 15L82 13V16L68 17.500L56 20Z" fill="#564630"/><path d="M-2 18.500Q10 17.500 20 19.500L36 20.500V22.500L20 22L-2 21Z" fill="#7d7068"/><path d="M-2 33Q30 30.500 82 32.500V35Q30 33.500 -2 36Z" fill="#a8965c" opacity=".7"/><path d="M35 22Q35 10 44 9.500Q53 9.500 52 20L55 32L50 44H34L32 32Z" fill="#2d1e1a"/><path d="M40.500 14Q44.500 11 49 14.500L48.500 24Q45.500 29 42 25Z" fill="#dba890"/><rect x="41.500" y="17.300" width="7.500" height="2.600" rx="1.200" fill="#23140f"/><path d="M43.500 23.500H47V25H43.500Z" fill="#b86a5a"/><path d="M28 36Q32 29 40 30L46 35L52 29Q58 30 61 38L62 56H27Z" fill="#1b1b1e"/><path d="M37 27L41 29L43 45L39 47Z" fill="#7e5a3c"/><path d="M44 33L47 33L47 52L44 52Z" fill="#6e665e"/><rect x="-2" y="51.500" width="84" height="3" fill="#2c2a26"/></g></svg></div>
<div class="th" style="left:126.2px;top:174px;width:79.500px;height:52.8px"><svg width="80" height="53" viewBox="0 0 80 53"><g filter="url(#b90)"><defs><linearGradient id="g10" x1="0" y1="0" x2="0" y2="1"><stop offset="0" stop-color="#386bbc"/><stop offset="1" stop-color="#5f96dc"/></linearGradient></defs><rect x="-5" y="-5" width="90" height="63" fill="#f3f4f8"/><path d="M2 -2H82V19L64 27L46 25L20 8Z" fill="url(#g10)"/><rect x="-2" y="-2" width="84" height="2.500" fill="#2a4f92"/><path d="M-2 0L6 2L20 9L34 16L46 24L52 27L44 28L30 21L14 13L-2 8Z" fill="#7c665a"/><path d="M0 4L10 8L22 15L12 12L-2 8Z" fill="#e8e6ea" opacity=".8"/><path d="M24 16L34 17L42 23L36 24Z" fill="#a58876"/><path d="M-2 -2L4 -2L8 4L-2 4Z" fill="#2d2a2c"/><path d="M62 27L70 22L82 17V33L68 31Z" fill="#9d8a80"/><path d="M72 22L82 18V24L76 27Z" fill="#e6e4e6"/><path d="M46 25L64 27L68 31L50 30Z" fill="#cbbfb4"/><path d="M28 23Q30 22 32 25L34 29L40 30L41 32L33 31.500L29 28Z" fill="#25262c"/><path d="M-2 28Q30 34 82 36V44Q30 42 -2 36Z" fill="#e4e7ee" opacity=".7"/><rect x="-2" y="51" width="84" height="3" fill="#4c4c4e"/></g></svg></div>
<div class="th" style="left:231.2px;top:168px;width:79.500px;height:58.8px"><svg width="80" height="59" viewBox="0 0 80 59"><g filter="url(#b90)"><defs><linearGradient id="g11" x1="0" y1="0" x2="0" y2="1"><stop offset="0" stop-color="#e29a42"/><stop offset=".25" stop-color="#e8a860"/><stop offset=".5" stop-color="#d48c78"/><stop offset=".7" stop-color="#a8705e"/></linearGradient></defs><rect x="-5" y="-5" width="90" height="69" fill="url(#g11)"/><ellipse cx="30" cy="5" rx="16" ry="4" fill="#f4c45c"/><ellipse cx="16" cy="20" rx="12" ry="5" fill="#e8a478" opacity=".8"/><path d="M56 8Q66 4 82 8V20Q66 18 56 14Z" fill="#d09a8a"/><path d="M60 24Q70 22 82 26V34H62Z" fill="#e8c8a0"/><path d="M-2 -2H8L10 12L6 22L8 30H-2Z" fill="#4a2a1c" opacity=".85"/><path d="M2 6Q8 10 10 18M6 12L12 8" stroke="#3a2018" stroke-width="1.200" fill="none"/><path d="M66 4Q74 0 82 4V32H72Q68 20 64 16Z" fill="#2e1d14"/><path d="M-2 26Q12 24 26 28V48H-2Z" fill="#2b1c18"/><path d="M24 26Q28 12 36 6L42 10L41 46H24Z" fill="#4c332a"/><path d="M36 6L42 9L62 23L64 44H41L42 10Z" fill="#d6b486"/><path d="M36 5.500L42 8.500L62 22.500L62 24.500L42 11L36 8Z" fill="#b2321f"/><path d="M31 3L36 5L33 10Z" fill="#3a2018"/><rect x="33" y="16" width="5" height="8" fill="#24342c"/><rect x="41" y="22" width="6" height="7" fill="#d4f2d6"/><rect x="40" y="29" width="5" height="17" fill="#5a6a3a"/><rect x="50" y="21" width="2.500" height="6" fill="#5a4030"/><rect x="55" y="24" width="2.500" height="6" fill="#5a4030"/><rect x="30" y="34" width="6" height="11" fill="#2a1a16"/><rect x="47" y="34" width="16" height="10" fill="#a87a58"/><rect x="52" y="36" width="3" height="8" fill="#3a2420"/><path d="M62 30Q68 28 72 34V46H62Z" fill="#3b2a26"/><rect x="64" y="32" width="4" height="3" fill="#d8c8a0"/><path d="M-2 42Q30 44 82 40V64H-2Z" fill="#2a1b19"/><path d="M10 48Q40 46 82 45V52Q40 52 10 54Z" fill="#46302b"/><rect x="9" y="41" width="3" height="6" fill="#8a2a20"/></g></svg></div>
<div class="th" style="left:336.2px;top:168px;width:79.500px;height:58.8px"><svg width="80" height="59" viewBox="0 0 80 59"><g filter="url(#b90)"><rect x="-5" y="-5" width="90" height="69" fill="#8a6550"/><path d="M1 -2H30L28 11L10 9L1 13Z" fill="#e6cebd"/><path d="M28 -2H48L46 20L44 34H36L32 20Z" fill="#f6eade"/><ellipse cx="40" cy="24" rx="5.500" ry="10" fill="#fbf4ec"/><path d="M-2 10L12 11L28 15L34 34H-2Z" fill="#7a5643"/><path d="M6 13V30M13 14V32M21 16V32M27 18V32" stroke="#a07c68" stroke-width="1.500"/><rect x="8" y="21" width="2.500" height="9" fill="#d2b6a2"/><path d="M-2 -2H2V40H-2Z" fill="#5a3a2c"/><path d="M46 -2H82V36H46Q50 20 46 -2Z" fill="#573628"/><path d="M50 4L62 16L58 30M66 0L72 14M56 0L52 14" stroke="#86604c" stroke-width="1.500" fill="none"/><path d="M70 21Q77 19 78.500 28L78 38H70.500Q68.500 28 70 21Z" fill="#f0e0d0"/><path d="M74 22Q78 26 74 32" stroke="#5a3424" stroke-width="1.200" fill="none"/><rect x="31" y="5.500" width="31" height="9" rx="3.500" fill="#3a1e14"/><rect x="31" y="5.500" width="31" height="9" rx="3.500" fill="none" stroke="#c2a28a" stroke-width=".800"/><ellipse cx="53" cy="9" rx="2.400" ry="2" fill="#9a7a68"/><ellipse cx="42" cy="10.500" rx="4" ry="2" fill="#6a4a3c"/><rect x="-2" y="33" width="84" height="8" fill="#6c4838"/><rect x="25" y="35.500" width="9" height="3.500" fill="#b89c88"/><rect x="53" y="33.500" width="13" height="6" rx="1.500" fill="#e0cebe"/><rect x="55" y="36.500" width="9" height="2.500" fill="#7a5a4a"/><path d="M-2 38Q40 36 82 40V64H-2Z" fill="#3e2016"/><path d="M34 40H64V45H34Z" fill="#563626"/><ellipse cx="16" cy="57" rx="17.500" ry="17" fill="#4a2a1e" stroke="#24100a" stroke-width="3"/><path d="M0 46Q16 36 32 46" stroke="#7a5a48" stroke-width="1" fill="none"/><circle cx="13" cy="52" r="3.200" fill="#dcc6b0"/><circle cx="20.500" cy="52" r="3.200" fill="#dcc6b0"/><circle cx="13" cy="52" r="1.600" fill="#9a7a64"/><circle cx="20.500" cy="52" r="1.600" fill="#9a7a64"/><circle cx="28" cy="55.500" r="2" fill="#d8c4b0"/><circle cx="6" cy="54" r="1.300" fill="#c8b09a"/><rect x="38" y="50" width="16" height="1.800" fill="#c4ac98"/><rect x="36" y="54" width="22" height="5" fill="#9c7e66"/><path d="M66 42Q74 38 82 42V64H62Q62 50 66 42Z" fill="#987460"/><path d="M68 52Q76 48 82 50V58Q74 56 68 60Z" fill="#b4927a"/><path d="M60 38Q66 42 64 64H56Z" fill="#2a120c"/></g></svg></div>
<div class="th" style="left:21.2px;top:257.3px;width:79.500px;height:8px"><svg width="80" height="8" viewBox="0 0 80 8"><g filter="url(#b90)"><rect x="-5" y="-5" width="90" height="20" fill="#c9aa9a"/><path d="M24 9Q34 3 46 9Z" fill="#7d5f56"/></g></svg></div>
<div class="th" style="left:126.2px;top:251px;width:79.500px;height:14px"><svg width="80" height="14" viewBox="0 0 80 14"><g filter="url(#b30)"><defs><linearGradient id="g4b" x1="0" y1="0" x2="0" y2="1"><stop offset="0" stop-color="#6680ae"/><stop offset="1" stop-color="#9fafc8"/></linearGradient></defs><rect x="-5" y="-5" width="90" height="25" fill="url(#g4b)"/></g></svg></div>
<div class="th" style="left:231.2px;top:251px;width:79.500px;height:14px"><svg width="80" height="14" viewBox="0 0 80 14"><g filter="url(#b30)"><defs><linearGradient id="g4c" x1="0" y1="0" x2="1" y2="1"><stop offset="0" stop-color="#858fa0"/><stop offset="1" stop-color="#c4cad4"/></linearGradient></defs><rect x="-5" y="-5" width="90" height="25" fill="url(#g4c)"/></g></svg></div>
<div class="th" style="left:336.2px;top:251px;width:79.500px;height:14px"><svg width="80" height="14" viewBox="0 0 80 14"><g filter="url(#b90)"><rect x="-5" y="-5" width="90" height="25" fill="#55607a"/><rect x="-1.0" y="0" width="2.5" height="2.200" fill="#dfe3ea"/><rect x="1.5" y="0" width="3" height="2.200" fill="#2e4a7a"/><rect x="4.5" y="0" width="1.5" height="2.200" fill="#b83a3a"/><rect x="6.0" y="0" width="1.5" height="2.200" fill="#8e5a6a"/><rect x="7.5" y="0" width="1.5" height="2.200" fill="#6a2a38"/><rect x="9.0" y="0" width="2" height="2.200" fill="#27335a"/><rect x="11.0" y="0" width="1.5" height="2.200" fill="#e8c8b4"/><rect x="12.5" y="0" width="3" height="2.200" fill="#b83a3a"/><rect x="15.5" y="0" width="2" height="2.200" fill="#b83a3a"/><rect x="17.5" y="0" width="3" height="2.200" fill="#27335a"/><rect x="20.5" y="0" width="1.5" height="2.200" fill="#3b7aa8"/><rect x="22.0" y="0" width="1.5" height="2.200" fill="#c8d0e0"/><rect x="23.5" y="0" width="3" height="2.200" fill="#27335a"/><rect x="26.5" y="0" width="2" height="2.200" fill="#27335a"/><rect x="28.5" y="0" width="2" height="2.200" fill="#1d2236"/><rect x="30.5" y="0" width="3" height="2.200" fill="#dfe3ea"/><rect x="33.5" y="0" width="1.5" height="2.200" fill="#c8d0e0"/><rect x="35.0" y="0" width="2.5" height="2.200" fill="#6a2a38"/><rect x="37.5" y="0" width="2" height="2.200" fill="#b83a3a"/><rect x="39.5" y="0" width="2" height="2.200" fill="#8e5a6a"/><rect x="41.5" y="0" width="1.5" height="2.200" fill="#6a2a38"/><rect x="43.0" y="0" width="1.5" height="2.200" fill="#c8d0e0"/><rect x="44.5" y="0" width="1.5" height="2.200" fill="#c8d0e0"/><rect x="46.0" y="0" width="2" height="2.200" fill="#4a8a8a"/><rect x="48.0" y="0" width="3" height="2.200" fill="#8e5a6a"/><rect x="51.0" y="0" width="3" height="2.200" fill="#c8d0e0"/><rect x="54.0" y="0" width="3" height="2.200" fill="#8e5a6a"/><rect x="57.0" y="0" width="2.5" height="2.200" fill="#3b7aa8"/><rect x="59.5" y="0" width="2" height="2.200" fill="#3b7aa8"/><rect x="61.5" y="0" width="1.5" height="2.200" fill="#c8d0e0"/><rect x="63.0" y="0" width="2.5" height="2.200" fill="#6a2a38"/><rect x="65.5" y="0" width="3" height="2.200" fill="#8e5a6a"/><rect x="68.5" y="0" width="3" height="2.200" fill="#1d2236"/><rect x="71.5" y="0" width="1.5" height="2.200" fill="#b83a3a"/><rect x="73.0" y="0" width="3" height="2.200" fill="#dfe3ea"/><rect x="76.0" y="0" width="2.5" height="2.200" fill="#dfe3ea"/><rect x="78.5" y="0" width="3" height="2.200" fill="#e8c8b4"/><rect x="81.5" y="0" width="1.5" height="2.200" fill="#2e4a7a"/><rect x="-1.0" y="2" width="1.5" height="2.200" fill="#6a2a38"/><rect x="0.5" y="2" width="2.5" height="2.200" fill="#8e5a6a"/><rect x="3.0" y="2" width="2.5" height="2.200" fill="#c8d0e0"/><rect x="5.5" y="2" width="3" height="2.200" fill="#c8d0e0"/><rect x="8.5" y="2" width="3" height="2.200" fill="#b83a3a"/><rect x="11.5" y="2" width="1.5" height="2.200" fill="#1d2236"/><rect x="13.0" y="2" width="3" height="2.200" fill="#2e4a7a"/><rect x="16.0" y="2" width="1.5" height="2.200" fill="#27335a"/><rect x="17.5" y="2" width="2.5" height="2.200" fill="#2e4a7a"/><rect x="20.0" y="2" width="3" height="2.200" fill="#1d2236"/><rect x="23.0" y="2" width="3" height="2.200" fill="#2e4a7a"/><rect x="26.0" y="2" width="2.5" height="2.200" fill="#27335a"/><rect x="28.5" y="2" width="3" height="2.200" fill="#8e5a6a"/><rect x="31.5" y="2" width="2" height="2.200" fill="#c8d0e0"/><rect x="33.5" y="2" width="1.5" height="2.200" fill="#4a8a8a"/><rect x="35.0" y="2" width="1.5" height="2.200" fill="#3b7aa8"/><rect x="36.5" y="2" width="2.5" height="2.200" fill="#dfe3ea"/><rect x="39.0" y="2" width="2" height="2.200" fill="#e8c8b4"/><rect x="41.0" y="2" width="3" height="2.200" fill="#4a8a8a"/><rect x="44.0" y="2" width="1.5" height="2.200" fill="#dfe3ea"/><rect x="45.5" y="2" width="3" height="2.200" fill="#e8c8b4"/><rect x="48.5" y="2" width="2.5" height="2.200" fill="#dfe3ea"/><rect x="51.0" y="2" width="3" height="2.200" fill="#6a2a38"/><rect x="54.0" y="2" width="2.5" height="2.200" fill="#e8c8b4"/><rect x="56.5" y="2" width="2.5" height="2.200" fill="#2e4a7a"/><rect x="59.0" y="2" width="3" height="2.200" fill="#3b7aa8"/><rect x="62.0" y="2" width="2" height="2.200" fill="#b83a3a"/><rect x="64.0" y="2" width="2" height="2.200" fill="#dfe3ea"/><rect x="66.0" y="2" width="2" height="2.200" fill="#2e4a7a"/><rect x="68.0" y="2" width="2" height="2.200" fill="#27335a"/><rect x="70.0" y="2" width="3" height="2.200" fill="#c8d0e0"/><rect x="73.0" y="2" width="2" height="2.200" fill="#1d2236"/><rect x="75.0" y="2" width="2.5" height="2.200" fill="#27335a"/><rect x="77.5" y="2" width="2" height="2.200" fill="#e8c8b4"/><rect x="79.5" y="2" width="2.5" height="2.200" fill="#c8d0e0"/><rect x="-1.0" y="4" width="2.5" height="2.200" fill="#dfe3ea"/><rect x="1.5" y="4" width="1.5" height="2.200" fill="#4a8a8a"/><rect x="3.0" y="4" width="3" height="2.200" fill="#e8c8b4"/><rect x="6.0" y="4" width="3" height="2.200" fill="#e8c8b4"/><rect x="9.0" y="4" width="1.5" height="2.200" fill="#4a8a8a"/><rect x="10.5" y="4" width="3" height="2.200" fill="#27335a"/><rect x="13.5" y="4" width="2" height="2.200" fill="#b83a3a"/><rect x="15.5" y="4" width="2" height="2.200" fill="#4a8a8a"/><rect x="17.5" y="4" width="2" height="2.200" fill="#b83a3a"/><rect x="19.5" y="4" width="2.5" height="2.200" fill="#c8d0e0"/><rect x="22.0" y="4" width="1.5" height="2.200" fill="#b83a3a"/><rect x="23.5" y="4" width="1.5" height="2.200" fill="#c8d0e0"/><rect x="25.0" y="4" width="2" height="2.200" fill="#6a2a38"/><rect x="27.0" y="4" width="1.5" height="2.200" fill="#8e5a6a"/><rect x="28.5" y="4" width="1.5" height="2.200" fill="#b83a3a"/><rect x="30.0" y="4" width="2" height="2.200" fill="#c8d0e0"/><rect x="32.0" y="4" width="3" height="2.200" fill="#dfe3ea"/><rect x="35.0" y="4" width="2.5" height="2.200" fill="#8e5a6a"/><rect x="37.5" y="4" width="2.5" height="2.200" fill="#4a8a8a"/><rect x="40.0" y="4" width="1.5" height="2.200" fill="#b83a3a"/><rect x="41.5" y="4" width="3" height="2.200" fill="#4a8a8a"/><rect x="44.5" y="4" width="3" height="2.200" fill="#4a8a8a"/><rect x="47.5" y="4" width="2.5" height="2.200" fill="#b83a3a"/><rect x="50.0" y="4" width="2" height="2.200" fill="#b83a3a"/><rect x="52.0" y="4" width="2.5" height="2.200" fill="#1d2236"/><rect x="54.5" y="4" width="3" height="2.200" fill="#dfe3ea"/><rect x="57.5" y="4" width="1.5" height="2.200" fill="#3b7aa8"/><rect x="59.0" y="4" width="2.5" height="2.200" fill="#dfe3ea"/><rect x="61.5" y="4" width="1.5" height="2.200" fill="#6a2a38"/><rect x="63.0" y="4" width="2.5" height="2.200" fill="#2e4a7a"/><rect x="65.5" y="4" width="1.5" height="2.200" fill="#1d2236"/><rect x="67.0" y="4" width="2.5" height="2.200" fill="#dfe3ea"/><rect x="69.5" y="4" width="2.5" height="2.200" fill="#3b7aa8"/><rect x="72.0" y="4" width="2.5" height="2.200" fill="#2e4a7a"/><rect x="74.5" y="4" width="2" height="2.200" fill="#c8d0e0"/><rect x="76.5" y="4" width="2" height="2.200" fill="#3b7aa8"/><rect x="78.5" y="4" width="3" height="2.200" fill="#3b7aa8"/><rect x="81.5" y="4" width="2" height="2.200" fill="#6a2a38"/><rect x="-1.0" y="6" width="3" height="2.200" fill="#8e5a6a"/><rect x="2.0" y="6" width="1.5" height="2.200" fill="#27335a"/><rect x="3.5" y="6" width="2.5" height="2.200" fill="#4a8a8a"/><rect x="6.0" y="6" width="2.5" height="2.200" fill="#3b7aa8"/><rect x="8.5" y="6" width="2.5" height="2.200" fill="#4a8a8a"/><rect x="11.0" y="6" width="2.5" height="2.200" fill="#8e5a6a"/><rect x="13.5" y="6" width="1.5" height="2.200" fill="#3b7aa8"/><rect x="15.0" y="6" width="1.5" height="2.200" fill="#3b7aa8"/><rect x="16.5" y="6" width="3" height="2.200" fill="#3b7aa8"/><rect x="19.5" y="6" width="2.5" height="2.200" fill="#3b7aa8"/><rect x="22.0" y="6" width="3" height="2.200" fill="#c8d0e0"/><rect x="25.0" y="6" width="1.5" height="2.200" fill="#4a8a8a"/><rect x="26.5" y="6" width="2.5" height="2.200" fill="#2e4a7a"/><rect x="29.0" y="6" width="1.5" height="2.200" fill="#2e4a7a"/><rect x="30.5" y="6" width="1.5" height="2.200" fill="#e8c8b4"/><rect x="32.0" y="6" width="2" height="2.200" fill="#4a8a8a"/><rect x="34.0" y="6" width="2" height="2.200" fill="#e8c8b4"/><rect x="36.0" y="6" width="2.5" height="2.200" fill="#b83a3a"/><rect x="38.5" y="6" width="3" height="2.200" fill="#4a8a8a"/><rect x="41.5" y="6" width="3" height="2.200" fill="#b83a3a"/><rect x="44.5" y="6" width="2" height="2.200" fill="#dfe3ea"/><rect x="46.5" y="6" width="2" height="2.200" fill="#27335a"/><rect x="48.5" y="6" width="2" height="2.200" fill="#c8d0e0"/><rect x="50.5" y="6" width="3" height="2.200" fill="#2e4a7a"/><rect x="53.5" y="6" width="2" height="2.200" fill="#c8d0e0"/><rect x="55.5" y="6" width="3" height="2.200" fill="#2e4a7a"/><rect x="58.5" y="6" width="2.5" height="2.200" fill="#dfe3ea"/><rect x="61.0" y="6" width="2" height="2.200" fill="#27335a"/><rect x="63.0" y="6" width="1.5" height="2.200" fill="#2e4a7a"/><rect x="64.5" y="6" width="1.5" height="2.200" fill="#6a2a38"/><rect x="66.0" y="6" width="2" height="2.200" fill="#e8c8b4"/><rect x="68.0" y="6" width="2" height="2.200" fill="#3b7aa8"/><rect x="70.0" y="6" width="1.5" height="2.200" fill="#1d2236"/><rect x="71.5" y="6" width="2" height="2.200" fill="#1d2236"/><rect x="73.5" y="6" width="2" height="2.200" fill="#c8d0e0"/><rect x="75.5" y="6" width="2.5" height="2.200" fill="#1d2236"/><rect x="78.0" y="6" width="3" height="2.200" fill="#dfe3ea"/><rect x="81.0" y="6" width="1.5" height="2.200" fill="#8e5a6a"/><rect x="-1.0" y="8" width="3" height="2.200" fill="#2e4a7a"/><rect x="2.0" y="8" width="3" height="2.200" fill="#6a2a38"/><rect x="5.0" y="8" width="2" height="2.200" fill="#6a2a38"/><rect x="7.0" y="8" width="2" height="2.200" fill="#6a2a38"/><rect x="9.0" y="8" width="1.5" height="2.200" fill="#4a8a8a"/><rect x="10.5" y="8" width="2" height="2.200" fill="#c8d0e0"/><rect x="12.5" y="8" width="1.5" height="2.200" fill="#dfe3ea"/><rect x="14.0" y="8" width="2" height="2.200" fill="#dfe3ea"/><rect x="16.0" y="8" width="3" height="2.200" fill="#c8d0e0"/><rect x="19.0" y="8" width="1.5" height="2.200" fill="#6a2a38"/><rect x="20.5" y="8" width="1.5" height="2.200" fill="#8e5a6a"/><rect x="22.0" y="8" width="3" height="2.200" fill="#b83a3a"/><rect x="25.0" y="8" width="1.5" height="2.200" fill="#3b7aa8"/><rect x="26.5" y="8" width="2" height="2.200" fill="#1d2236"/><rect x="28.5" y="8" width="1.5" height="2.200" fill="#b83a3a"/><rect x="30.0" y="8" width="3" height="2.200" fill="#6a2a38"/><rect x="33.0" y="8" width="1.5" height="2.200" fill="#b83a3a"/><rect x="34.5" y="8" width="3" height="2.200" fill="#8e5a6a"/><rect x="37.5" y="8" width="2" height="2.200" fill="#1d2236"/><rect x="39.5" y="8" width="3" height="2.200" fill="#6a2a38"/><rect x="42.5" y="8" width="3" height="2.200" fill="#6a2a38"/><rect x="45.5" y="8" width="2" height="2.200" fill="#6a2a38"/><rect x="47.5" y="8" width="2.5" height="2.200" fill="#6a2a38"/><rect x="50.0" y="8" width="2" height="2.200" fill="#4a8a8a"/><rect x="52.0" y="8" width="2" height="2.200" fill="#e8c8b4"/><rect x="54.0" y="8" width="1.5" height="2.200" fill="#e8c8b4"/><rect x="55.5" y="8" width="3" height="2.200" fill="#8e5a6a"/><rect x="58.5" y="8" width="1.5" height="2.200" fill="#2e4a7a"/><rect x="60.0" y="8" width="2" height="2.200" fill="#e8c8b4"/><rect x="62.0" y="8" width="1.5" height="2.200" fill="#3b7aa8"/><rect x="63.5" y="8" width="2.5" height="2.200" fill="#b83a3a"/><rect x="66.0" y="8" width="2" height="2.200" fill="#2e4a7a"/><rect x="68.0" y="8" width="2.5" height="2.200" fill="#dfe3ea"/><rect x="70.5" y="8" width="2.5" height="2.200" fill="#dfe3ea"/><rect x="73.0" y="8" width="3" height="2.200" fill="#3b7aa8"/><rect x="76.0" y="8" width="1.5" height="2.200" fill="#e8c8b4"/><rect x="77.5" y="8" width="3" height="2.200" fill="#dfe3ea"/><rect x="80.5" y="8" width="2" height="2.200" fill="#dfe3ea"/><rect x="-1.0" y="10" width="3" height="2.200" fill="#6a2a38"/><rect x="2.0" y="10" width="3" height="2.200" fill="#8e5a6a"/><rect x="5.0" y="10" width="3" height="2.200" fill="#3b7aa8"/><rect x="8.0" y="10" width="2.5" height="2.200" fill="#8e5a6a"/><rect x="10.5" y="10" width="1.5" height="2.200" fill="#8e5a6a"/><rect x="12.0" y="10" width="1.5" height="2.200" fill="#8e5a6a"/><rect x="13.5" y="10" width="3" height="2.200" fill="#4a8a8a"/><rect x="16.5" y="10" width="1.5" height="2.200" fill="#e8c8b4"/><rect x="18.0" y="10" width="2.5" height="2.200" fill="#6a2a38"/><rect x="20.5" y="10" width="2.5" height="2.200" fill="#6a2a38"/><rect x="23.0" y="10" width="1.5" height="2.200" fill="#b83a3a"/><rect x="24.5" y="10" width="2" height="2.200" fill="#b83a3a"/><rect x="26.5" y="10" width="1.5" height="2.200" fill="#1d2236"/><rect x="28.0" y="10" width="2.5" height="2.200" fill="#27335a"/><rect x="30.5" y="10" width="2" height="2.200" fill="#1d2236"/><rect x="32.5" y="10" width="2" height="2.200" fill="#e8c8b4"/><rect x="34.5" y="10" width="2.5" height="2.200" fill="#e8c8b4"/><rect x="37.0" y="10" width="2" height="2.200" fill="#6a2a38"/><rect x="39.0" y="10" width="3" height="2.200" fill="#8e5a6a"/><rect x="42.0" y="10" width="1.5" height="2.200" fill="#1d2236"/><rect x="43.5" y="10" width="1.5" height="2.200" fill="#dfe3ea"/><rect x="45.0" y="10" width="3" height="2.200" fill="#b83a3a"/><rect x="48.0" y="10" width="2.5" height="2.200" fill="#27335a"/><rect x="50.5" y="10" width="1.5" height="2.200" fill="#1d2236"/><rect x="52.0" y="10" width="1.5" height="2.200" fill="#c8d0e0"/><rect x="53.5" y="10" width="2" height="2.200" fill="#b83a3a"/><rect x="55.5" y="10" width="2.5" height="2.200" fill="#b83a3a"/><rect x="58.0" y="10" width="3" height="2.200" fill="#27335a"/><rect x="61.0" y="10" width="2.5" height="2.200" fill="#6a2a38"/><rect x="63.5" y="10" width="3" height="2.200" fill="#1d2236"/><rect x="66.5" y="10" width="2" height="2.200" fill="#27335a"/><rect x="68.5" y="10" width="2" height="2.200" fill="#b83a3a"/><rect x="70.5" y="10" width="2" height="2.200" fill="#1d2236"/><rect x="72.5" y="10" width="1.5" height="2.200" fill="#dfe3ea"/><rect x="74.0" y="10" width="2" height="2.200" fill="#1d2236"/><rect x="76.0" y="10" width="2.5" height="2.200" fill="#6a2a38"/><rect x="78.5" y="10" width="2" height="2.200" fill="#1d2236"/><rect x="80.5" y="10" width="3" height="2.200" fill="#6a2a38"/><rect x="-1.0" y="12" width="2" height="2.200" fill="#1d2236"/><rect x="1.0" y="12" width="2.5" height="2.200" fill="#27335a"/><rect x="3.5" y="12" width="2.5" height="2.200" fill="#27335a"/><rect x="6.0" y="12" width="1.5" height="2.200" fill="#27335a"/><rect x="7.5" y="12" width="2" height="2.200" fill="#6a2a38"/><rect x="9.5" y="12" width="3" height="2.200" fill="#3b7aa8"/><rect x="12.5" y="12" width="3" height="2.200" fill="#b83a3a"/><rect x="15.5" y="12" width="3" height="2.200" fill="#2e4a7a"/><rect x="18.5" y="12" width="3" height="2.200" fill="#6a2a38"/><rect x="21.5" y="12" width="3" height="2.200" fill="#6a2a38"/><rect x="24.5" y="12" width="2.5" height="2.200" fill="#3b7aa8"/><rect x="27.0" y="12" width="2" height="2.200" fill="#8e5a6a"/><rect x="29.0" y="12" width="2" height="2.200" fill="#2e4a7a"/><rect x="31.0" y="12" width="2" height="2.200" fill="#e8c8b4"/><rect x="33.0" y="12" width="2.5" height="2.200" fill="#27335a"/><rect x="35.5" y="12" width="2" height="2.200" fill="#27335a"/><rect x="37.5" y="12" width="1.5" height="2.200" fill="#2e4a7a"/><rect x="39.0" y="12" width="2.5" height="2.200" fill="#e8c8b4"/><rect x="41.5" y="12" width="2" height="2.200" fill="#27335a"/><rect x="43.5" y="12" width="1.5" height="2.200" fill="#2e4a7a"/><rect x="45.0" y="12" width="3" height="2.200" fill="#6a2a38"/><rect x="48.0" y="12" width="2.5" height="2.200" fill="#c8d0e0"/><rect x="50.5" y="12" width="2" height="2.200" fill="#1d2236"/><rect x="52.5" y="12" width="1.5" height="2.200" fill="#4a8a8a"/><rect x="54.0" y="12" width="2" height="2.200" fill="#dfe3ea"/><rect x="56.0" y="12" width="2.5" height="2.200" fill="#4a8a8a"/><rect x="58.5" y="12" width="1.5" height="2.200" fill="#1d2236"/><rect x="60.0" y="12" width="2.5" height="2.200" fill="#8e5a6a"/><rect x="62.5" y="12" width="2.5" height="2.200" fill="#3b7aa8"/><rect x="65.0" y="12" width="1.5" height="2.200" fill="#1d2236"/><rect x="66.5" y="12" width="2" height="2.200" fill="#8e5a6a"/><rect x="68.5" y="12" width="2" height="2.200" fill="#27335a"/><rect x="70.5" y="12" width="2.5" height="2.200" fill="#e8c8b4"/><rect x="73.0" y="12" width="1.5" height="2.200" fill="#4a8a8a"/><rect x="74.5" y="12" width="2.5" height="2.200" fill="#6a2a38"/><rect x="77.0" y="12" width="2" height="2.200" fill="#3b7aa8"/><rect x="79.0" y="12" width="1.5" height="2.200" fill="#b83a3a"/><rect x="80.5" y="12" width="2.5" height="2.200" fill="#b83a3a"/><rect x="56" y="3" width="20" height="6" fill="#7ab0b8" opacity=".55"/></g></svg></div>
<div class="tx" style="left:22.85px;top:69.55px;font-size:11.5px;line-height:15.5px;color:#1a1a1a;transform:scaleX(0.8276);">20140119_132659</div>
<div class="tx" style="left:128.70px;top:69.55px;font-size:11.5px;line-height:15.5px;color:#1a1a1a;transform:scaleX(0.8089);">20140121_154939</div>
<div class="tx" style="left:250.80px;top:69.55px;font-size:11.5px;line-height:15.5px;color:#1a1a1a;transform:scaleX(0.7749);">DSC_0062</div>
<div class="tx" style="left:355.50px;top:69.55px;font-size:11.5px;line-height:15.5px;color:#1a1a1a;transform:scaleX(0.7820);">DSC_0083</div>
<div class="tx" style="left:40.30px;top:147.45px;font-size:11.5px;line-height:15.5px;color:#1a1a1a;transform:scaleX(0.7820);">DSC_0122</div>
<div class="tx" style="left:145.50px;top:147.45px;font-size:11.5px;line-height:15.5px;color:#1a1a1a;transform:scaleX(0.7820);">DSC_0210</div>
<div class="tx" style="left:250.50px;top:147.45px;font-size:11.5px;line-height:15.5px;color:#1a1a1a;transform:scaleX(0.7820);">DSC_0234</div>
<div class="tx" style="left:355.50px;top:147.45px;font-size:11.5px;line-height:15.5px;color:#1a1a1a;transform:scaleX(0.7820);">DSC_0240</div>
<div class="tx" style="left:40.30px;top:229.95px;font-size:11.5px;line-height:15.5px;color:#1a1a1a;transform:scaleX(0.7820);">DSC_0333</div>
<div class="tx" style="left:145.50px;top:229.95px;font-size:11.5px;line-height:15.5px;color:#1a1a1a;transform:scaleX(0.7820);">DSC_0556</div>
<div class="tx" style="left:249.20px;top:229.95px;font-size:11.5px;line-height:15.5px;color:#1a1a1a;transform:scaleX(0.8176);">DSC01038</div>
<div class="tx" style="left:354.00px;top:229.95px;font-size:11.5px;line-height:15.5px;color:#1a1a1a;transform:scaleX(0.7998);">DSC07771</div>
</div>
<div class="abs" style="left:145px;top:350px;width:437px;height:1px;background:#f0f0f0;"></div>
<div class="tx" style="left:122.00px;top:361.25px;font-size:11.5px;line-height:15.5px;color:#111;transform:scaleX(0.9151);">Nome:</div>
<div class="abs" style="left:158px;top:358px;width:246.5px;height:21px;background:#fff;border:1px solid #7a7a7a"></div>
<div class="tx" style="left:162.00px;top:361.25px;font-size:11.5px;line-height:15.5px;color:#111;transform:scaleX(0.7998);">DSC_0234</div>
<svg class="abs" style="left:391px;top:365px" width="10" height="8" viewBox="0 0 10 8"><path d="M1.300 2L5 5.700L8.700 2" fill="none" stroke="#555" stroke-width="1.100"/></svg>
<div class="abs" style="left:415.5px;top:358px;width:165.5px;height:20.5px;background:#e3e3e3;border:1px solid #adadad"></div>
<div class="abs" style="left:418px;top:360px;width:146px;height:18px;overflow:hidden"><div class="tx" style="left:0.00px;top:1.25px;font-size:11.5px;line-height:15.5px;color:#111;transform:scaleX(0.8990);">JPEG Image (*.jpg;*.pjpeg;*.jpeg</div></div>
<svg class="abs" style="left:567px;top:365px" width="10" height="8" viewBox="0 0 10 8"><path d="M1.300 2L5 5.700L8.700 2" fill="none" stroke="#555" stroke-width="1.100"/></svg>
<div class="abs" style="left:416px;top:385px;width:76px;height:21px;background:#e5f1fb;border:1.500px solid #0078d7"></div>
<div class="tx" style="left:442.50px;top:387.75px;font-size:11.5px;line-height:15.5px;color:#111;transform:scaleX(0.9596);">Abrir</div>
<div class="abs" style="left:504px;top:385px;width:76.5px;height:21px;background:#e1e1e1;border:1px solid #adadad"></div>
<div class="tx" style="left:522.50px;top:387.75px;font-size:11.5px;line-height:15.5px;color:#111;transform:scaleX(0.8798);">Cancelar</div>
<svg class="abs" style="left:585px;top:407px" width="10" height="10" viewBox="0 0 10 10"><g fill="#b8b8b8"><rect x="7" y="1" width="2" height="2"/><rect x="4" y="4" width="2" height="2"/><rect x="7" y="4" width="2" height="2"/><rect x="1" y="7" width="2" height="2"/><rect x="4" y="7" width="2" height="2"/><rect x="7" y="7" width="2" height="2"/></g></svg>
</div>

</div></div>
</body>
</html>
